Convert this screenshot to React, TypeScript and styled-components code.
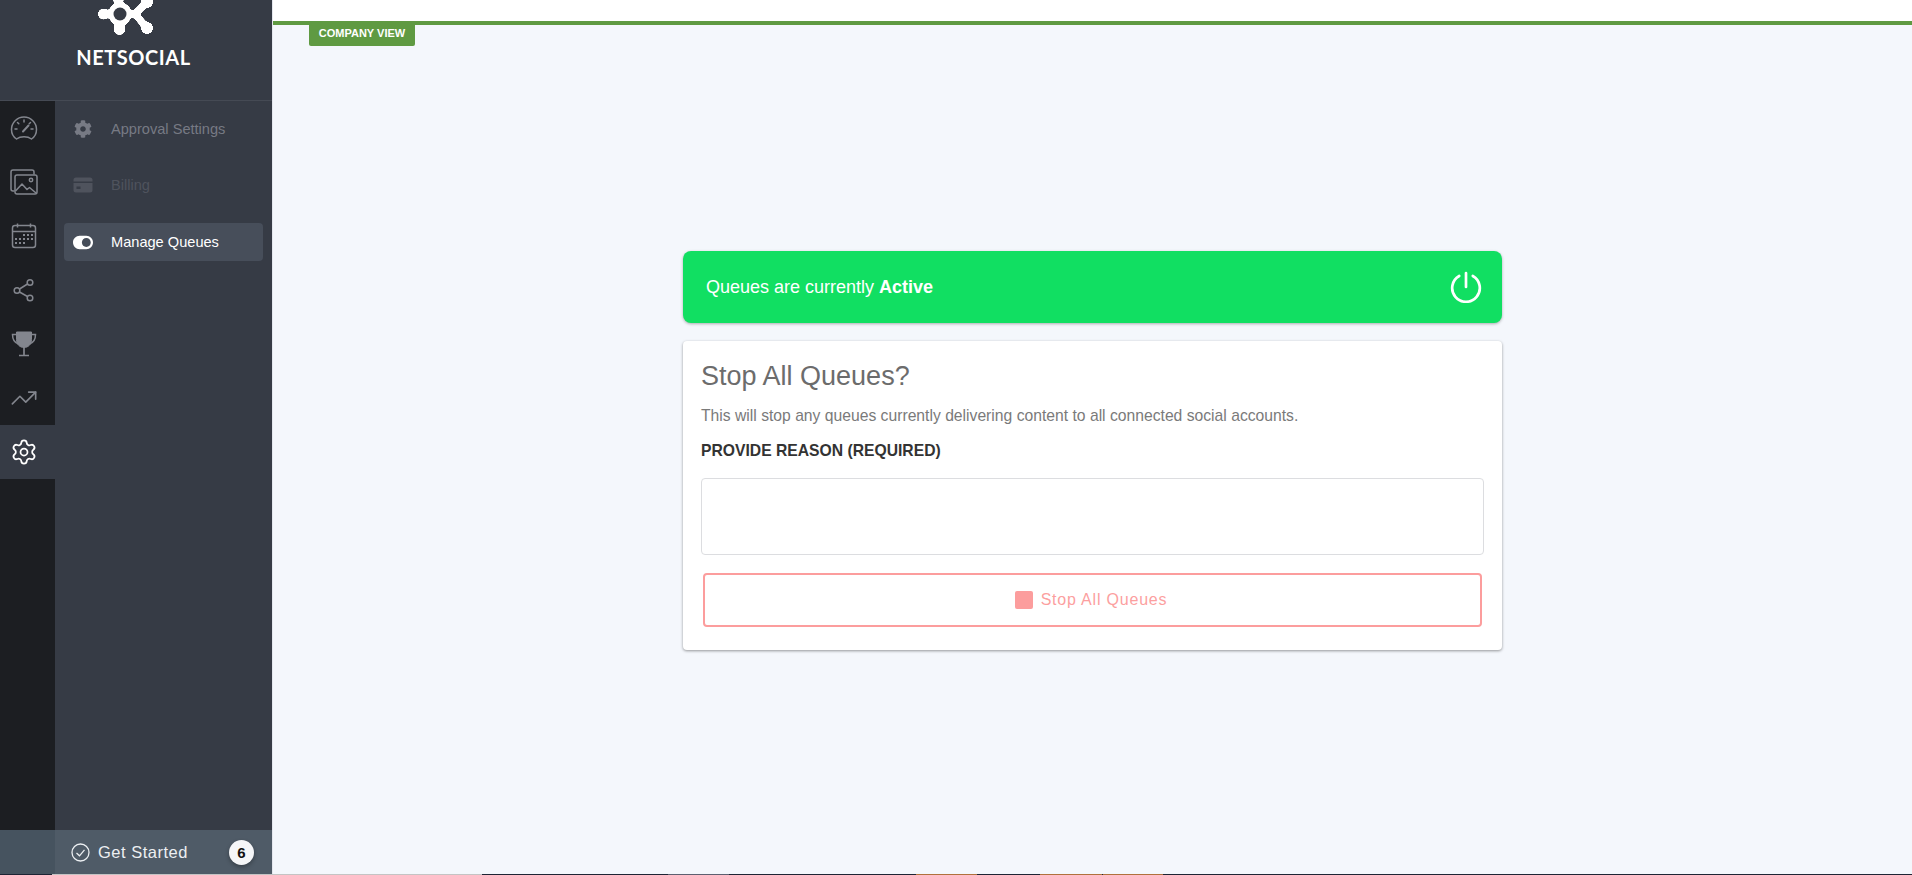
import React from 'react'
import styled, { createGlobalStyle } from 'styled-components'
import { Settings, TrendingUp } from 'lucide-react'
import { FaCog, FaToggleOn } from 'react-icons/fa'

const GlobalStyle = createGlobalStyle`
  html, body {
    margin: 0;
    padding: 0;
    background: #f4f7fc;
    font-family: 'Liberation Sans', Arial, sans-serif;
  }
`

const Page = styled.div`
  display: flex;
  flex-direction: column;
  height: 875px;
  overflow: hidden;
`

const Shell = styled.div`
  display: flex;
  flex: 1;
  min-height: 0;
`

const Sidebar = styled.aside`
  display: flex;
  flex-direction: column;
  width: 272px;
  flex-shrink: 0;
  background: #363b45;
  border-right: 1px solid #e4e7ee;
`

const LogoBlock = styled.div`
  display: flex;
  flex-direction: column;
  align-items: center;
  height: 100px;
  flex-shrink: 0;
  border-bottom: 1px solid #454a54;
`

const LogoText = styled.div`
  margin: 10px 5px 0 0;
  font-family: Lato, sans-serif;
  font-size: 20px;
  line-height: 18px;
  font-weight: 700;
  letter-spacing: 0.55px;
  color: #fff;
`

const Panels = styled.div`
  display: flex;
  flex: 1;
  min-height: 0;
`

const Rail = styled.nav`
  display: flex;
  flex-direction: column;
  width: 55px;
  flex-shrink: 0;
  background: #1c1e22;
`

const RailItem = styled.div<{ $active?: boolean }>`
  display: flex;
  align-items: center;
  height: 54px;
  padding-left: 10px;
  background: ${(p) => (p.$active ? '#363b45' : 'transparent')};
  color: ${(p) => (p.$active ? '#ffffff' : '#83868e')};
`

const SubNav = styled.nav`
  display: flex;
  flex-direction: column;
  flex: 1;
  gap: 18px;
  padding: 9px 9px 0;
`

const SubItem = styled.div<{ $active?: boolean; $dim?: boolean }>`
  display: flex;
  align-items: center;
  height: 38px;
  margin-top: ${(p) => (p.$active ? '1px' : '0')};
  padding-left: 9px;
  border-radius: 4px;
  font-size: 14.6px;
  background: ${(p) => (p.$active ? '#474e5a' : 'transparent')};
  color: ${(p) => (p.$active ? '#ffffff' : p.$dim ? '#4f535d' : '#777a84')};
`

const SubIcon = styled.span`
  display: flex;
  justify-content: center;
  width: 20px;
  margin-right: 18px;
`

const GetStarted = styled.div`
  display: flex;
  height: 44px;
  flex-shrink: 0;
  color: #eceff2;
`

const GetStartedEdge = styled.div`
  width: 55px;
  background: #46535f;
`

const GetStartedBody = styled.div`
  display: flex;
  align-items: center;
  flex: 1;
  padding: 0 18px 0 16px;
  background: #4f5b67;
  font-size: 16.5px;
  letter-spacing: 0.5px;
`

const GetStartedLabel = styled.span`
  flex: 1;
  margin-left: 8px;
`

const CountBadge = styled.span`
  display: flex;
  align-items: center;
  justify-content: center;
  width: 25px;
  height: 25px;
  border-radius: 50%;
  background: #f5f6f8;
  color: #111;
  font-size: 15px;
  font-weight: 700;
  letter-spacing: 0;
  box-shadow: 0 2px 4px rgba(0, 0, 0, 0.3);
`

const Main = styled.main`
  display: flex;
  flex-direction: column;
  flex: 1;
  min-width: 0;
`

const TopBar = styled.div`
  height: 21px;
  flex-shrink: 0;
  background: #fff;
  border-bottom: 4px solid #5f9a42;
`

const ViewTag = styled.div`
  align-self: flex-start;
  margin-left: 36px;
  width: 106px;
  height: 21px;
  line-height: 16px;
  text-align: center;
  font-size: 11px;
  font-weight: 700;
  color: #fff;
  background: #5f9a42;
  border-radius: 0 0 2px 2px;
`

const Center = styled.div`
  display: flex;
  flex: 1;
  flex-direction: column;
  align-items: center;
  padding-top: 205px;
`

const Column = styled.div`
  display: flex;
  flex-direction: column;
  gap: 18px;
  width: 819px;
`

const StatusBanner = styled.div`
  display: flex;
  align-items: center;
  justify-content: space-between;
  height: 72px;
  padding: 0 20px 0 23px;
  box-sizing: border-box;
  border-radius: 8px;
  background: #11df62;
  color: #fff;
  font-size: 18px;
  box-shadow: 0 1px 3px rgba(0, 0, 0, 0.3);
`

const Card = styled.section`
  display: flex;
  flex-direction: column;
  padding: 19px 18px 23px;
  border-radius: 4px;
  background: #fff;
  box-shadow: 0 1px 3px rgba(0, 0, 0, 0.4);
`

const Title = styled.h2`
  margin: 0;
  font-size: 27px;
  line-height: 32px;
  font-weight: 400;
  color: #6c6c6c;
`

const Description = styled.p`
  margin: 15px 0 0;
  font-size: 15.7px;
  line-height: 18px;
  color: #7a7a7a;
`

const ReasonLabel = styled.label`
  margin-top: 17px;
  font-size: 15.7px;
  line-height: 18px;
  font-weight: 700;
  color: #333;
`

const ReasonInput = styled.textarea`
  display: block;
  box-sizing: border-box;
  width: 100%;
  height: 77px;
  margin-top: 18px;
  border: 1px solid #dcdde0;
  border-radius: 4px;
  background: #fff;
  resize: none;
  outline: none;
`

const StopButton = styled.button`
  display: flex;
  align-items: center;
  justify-content: center;
  gap: 8px;
  height: 54px;
  margin: 18px 2px 0;
  padding: 0 3px 0 0;
  border: 2px solid #fc9d9d;
  border-radius: 4px;
  background: #fff;
  color: #fc9f9f;
  font-family: inherit;
  font-size: 16px;
  letter-spacing: 0.8px;
`

const StopSquare = styled.span`
  width: 18px;
  height: 18px;
  border-radius: 2px;
  background: #fc9d9d;
`

const Taskbar = styled.div`
  display: flex;
  height: 1px;
  flex-shrink: 0;
  background: #1e2434;
`

const TaskSegment = styled.div<{ $width: number; $color: string }>`
  width: ${(p) => p.$width}px;
  background: ${(p) => p.$color};
`

const taskSegments = [
  { width: 52, color: '#1e2434' },
  { width: 430, color: '#c4c4c4' },
  { width: 186, color: '#1e2434' },
  { width: 61, color: '#5d6070' },
  { width: 187, color: '#1e2434' },
  { width: 61, color: '#b0713c' },
  { width: 63, color: '#1e2434' },
  { width: 62, color: '#b0713c' },
  { width: 1, color: '#1e2434' },
  { width: 60, color: '#b0713c' },
]

const LogoMark = () => (
  <svg width="70" height="38" viewBox="0 0 70 38" style={{ marginRight: 12 }}>
    <defs>
      <filter id="goo" x="-20%" y="-20%" width="140%" height="140%">
        <feGaussianBlur stdDeviation="1.8" />
        <feColorMatrix values="1 0 0 0 0  0 1 0 0 0  0 0 1 0 0  0 0 0 14 -6" />
      </filter>
    </defs>
    <g transform="translate(-95 0)">
      <g filter="url(#goo)" fill="#fff" stroke="#fff">
        <g strokeWidth="7" strokeLinecap="round">
          <path d="M104 14H135" />
          <path d="M120 14L119 29" />
          <path d="M118 -4L120 14" />
          <path d="M135 14L147 28" />
          <path d="M135 14L147 2" />
        </g>
        <circle cx="120" cy="14" r="11.500" stroke="none" />
        <circle cx="103.500" cy="14" r="5.500" stroke="none" />
        <circle cx="119.500" cy="29" r="6" stroke="none" />
        <circle cx="147" cy="28" r="6" stroke="none" />
        <circle cx="147" cy="2" r="6" stroke="none" />
        <circle cx="118" cy="-4" r="7" stroke="none" />
      </g>
      <circle cx="120" cy="14" r="6.500" fill="#363b45" />
    </g>
  </svg>
)

const GaugeIcon = () => (
  <svg width="28" height="28" viewBox="0 0 28 28" fill="none" stroke="currentColor" strokeWidth="1.5" strokeLinecap="round">
    <path d="M6.500 25C3.200 22.800 1.500 19.200 1.500 15.500 1.500 8.600 7.100 3 14 3s12.500 5.600 12.500 12.500c0 3.700-1.700 7.300-5 9.500-2-1.500-4.700-2.300-7.500-2.300S8.500 23.500 6.500 25z" />
    <path d="M14 6v2M7.500 8.500l1.300 1.300M20.500 8.500l-1.300 1.300M5 15h2M21 15h2" />
    <path d="M13 17.500l5.500-6" strokeWidth="2" />
  </svg>
)

const ImagesIcon = () => (
  <svg width="28" height="28" viewBox="0 0 28 28" fill="none" stroke="currentColor" strokeWidth="1.5" strokeLinejoin="round">
    <path d="M4.500 23H3a2 2 0 0 1-2-2V4a2 2 0 0 1 2-2h19a2 2 0 0 1 2 2v2.500" />
    <rect x="5" y="7" width="22" height="19" rx="2" />
    <circle cx="21" cy="12" r="1.700" />
    <path d="M5.500 23l6.500-7 5 5.500 2.500-2 6.500 5.500" />
  </svg>
)

const CalendarIcon = () => (
  <svg width="28" height="28" viewBox="0 0 28 28" fill="none" stroke="currentColor" strokeWidth="1.5">
    <rect x="2.500" y="3.500" width="23" height="22" rx="2.500" />
    <path d="M2.500 9.500h23M7.500 1.500v4M20.500 1.500v4" />
    <path d="M13 13h2M17 13h2M21 13h2M5 17h2M9 17h2M13 17h2M17 17h2M21 17h2M5 21h2M9 21h2M13 21h2" strokeWidth="2.200" />
  </svg>
)

const ShareIcon = () => (
  <svg width="28" height="28" viewBox="0 0 28 28" fill="none" stroke="currentColor" strokeWidth="1.5">
    <circle cx="20" cy="6.500" r="2.800" />
    <circle cx="7" cy="14.500" r="2.800" />
    <circle cx="20" cy="22" r="2.800" />
    <path d="M9.500 13L17.500 8M9.500 16L17.500 20.500" />
  </svg>
)

const TrophyIcon = () => (
  <svg width="28" height="28" viewBox="0 0 28 28" fill="none" stroke="currentColor">
    <path d="M6.500 2h15v7.500c0 4.500-3 8-7.500 8s-7.500-3.500-7.500-8z" fill="currentColor" strokeWidth="1" />
    <path d="M7 4.500H2.500c0 5 1.500 8 6 9.500M21 4.500h4.500c0 5-1.500 8-6 9.500" strokeWidth="1.500" />
    <path d="M14 16v9M9 25.500h10" strokeWidth="1.700" />
  </svg>
)

const CardIcon = () => (
  <svg width="20" height="16" viewBox="0 0 20 16">
    <path d="M3 .500h14a2.500 2.500 0 0 1 2.500 2.500v1.500H.5V3A2.500 2.500 0 0 1 3 .500z" fill="currentColor" />
    <path d="M.5 6h19v7a2.500 2.500 0 0 1-2.500 2.500H3A2.500 2.500 0 0 1 .5 13z" fill="currentColor" />
    <rect x="3.500" y="9.500" width="4" height="2.500" fill="#363b45" />
  </svg>
)

const PowerIcon = () => (
  <svg width="32" height="32" viewBox="0 0 32 32" fill="none" stroke="#fff" strokeWidth="2.700" strokeLinecap="round">
    <path d="M16 2v14" />
    <path d="M9.200 5A13.800 13.800 0 1 0 22.800 5" />
  </svg>
)

const CheckCircleIcon = () => (
  <svg width="19" height="19" viewBox="0 0 19 19" fill="none" stroke="currentColor" strokeWidth="1.300">
    <circle cx="9.500" cy="9.500" r="8.500" />
    <path d="M5.500 10l3 2.800 5-6" />
  </svg>
)

const App = () => {
  return (
    <Page>
      <GlobalStyle />
      <Shell>
        <Sidebar>
          <LogoBlock>
            <LogoMark />
            <LogoText>NETSOCIAL</LogoText>
          </LogoBlock>
          <Panels>
            <Rail>
              <RailItem><GaugeIcon /></RailItem>
              <RailItem><ImagesIcon /></RailItem>
              <RailItem><CalendarIcon /></RailItem>
              <RailItem><ShareIcon /></RailItem>
              <RailItem><TrophyIcon /></RailItem>
              <RailItem><TrendingUp size={28} strokeWidth={1.4} /></RailItem>
              <RailItem $active><Settings size={28} strokeWidth={1.5} /></RailItem>
            </Rail>
            <SubNav>
              <SubItem>
                <SubIcon><FaCog size={18} /></SubIcon>
                Approval Settings
              </SubItem>
              <SubItem $dim>
                <SubIcon><CardIcon /></SubIcon>
                Billing
              </SubItem>
              <SubItem $active>
                <SubIcon><FaToggleOn size={21} /></SubIcon>
                Manage Queues
              </SubItem>
            </SubNav>
          </Panels>
          <GetStarted>
            <GetStartedEdge />
            <GetStartedBody>
              <CheckCircleIcon />
              <GetStartedLabel>Get Started</GetStartedLabel>
              <CountBadge>6</CountBadge>
            </GetStartedBody>
          </GetStarted>
        </Sidebar>
        <Main>
          <TopBar />
          <ViewTag>COMPANY VIEW</ViewTag>
          <Center>
            <Column>
              <StatusBanner>
                <span>Queues are currently <b>Active</b></span>
                <PowerIcon />
              </StatusBanner>
              <Card>
                <Title>Stop All Queues?</Title>
                <Description>
                  This will stop any queues currently delivering content to all connected social accounts.
                </Description>
                <ReasonLabel>PROVIDE REASON (REQUIRED)</ReasonLabel>
                <ReasonInput />
                <StopButton>
                  <StopSquare />
                  Stop All Queues
                </StopButton>
              </Card>
            </Column>
          </Center>
        </Main>
      </Shell>
      <Taskbar>
        {taskSegments.map((segment, i) => (
          <TaskSegment key={i} $width={segment.width} $color={segment.color} />
        ))}
      </Taskbar>
    </Page>
  )
}

export default App
